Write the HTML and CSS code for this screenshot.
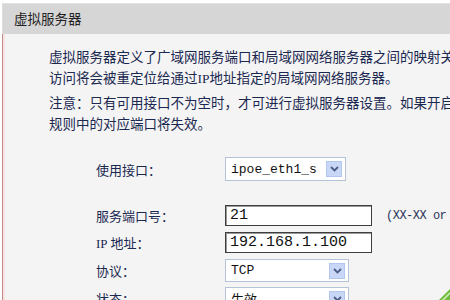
FILE: index.html
```html
<!DOCTYPE html>
<html>
  <head>
    <meta charset="utf-8">
    <title>虚拟服务器</title>
    <link rel="stylesheet" href="styles.css">
  </head>
  <body>
    <div class="panel">
      <div class="panel-title">虚拟服务器</div>
      <div class="panel-body">
        <p class="intro">虚拟服务器定义了广域网服务端口和局域网网络服务器之间的映射关系，所有对该广域网服务端口的<br>访问将会被重定位给通过<span class="latin">IP</span>地址指定的局域网网络服务器。</p>
        <p class="intro">注意：只有可用接口不为空时，才可进行虚拟服务器设置。如果开启了DMZ主机，则DMZ主机<br>规则中的对应端口将失效。</p>

        <div class="form">
          <div class="row row-first">
            <div class="label">使用接口：</div>
            <div class="select select-iface">
              <span class="select-text">ipoe_eth1_s</span>
              <span class="select-arrow">
                <svg width="9" height="6" viewBox="0 0 9 6"><path d="M1 1 L4.5 4.5 L8 1" fill="none" stroke="#4a5d86" stroke-width="1.8"/></svg>
              </span>
            </div>
          </div>
          <div class="row row-input row-gap">
            <div class="label">服务端口号：</div>
            <div class="input">21</div>
            <div class="hint">(XX-XX or XX)</div>
          </div>
          <div class="row row-input">
            <div class="label"><span class="latin">IP</span> 地址：</div>
            <div class="input">192.168.1.100</div>
          </div>
          <div class="row">
            <div class="label">协议：</div>
            <div class="select select-proto">
              <span class="select-text">TCP</span>
              <span class="select-arrow">
                <svg width="9" height="6" viewBox="0 0 9 6"><path d="M1 1 L4.5 4.5 L8 1" fill="none" stroke="#4a5d86" stroke-width="1.8"/></svg>
              </span>
            </div>
          </div>
          <div class="row">
            <div class="label">状态：</div>
            <div class="select select-proto">
              <span class="select-text cjk">生效</span>
              <span class="select-arrow">
                <svg width="9" height="6" viewBox="0 0 9 6"><path d="M1 1 L4.5 4.5 L8 1" fill="none" stroke="#4a5d86" stroke-width="1.8"/></svg>
              </span>
            </div>
            <svg class="corner-icon" width="14" height="14" viewBox="0 0 14 14"><path d="M2 14 L14 2 L14 14 Z" fill="#6fbf3f"/><path d="M6 14 L14 6" stroke="#d8f0c0" stroke-width="1.5"/></svg>
          </div>
        </div>
      </div>
    </div>
  </body>
</html>
```

FILE: styles.css
```css
body {
  margin: 0;
  width: 450px;
  height: 300px;
  overflow: hidden;
  background-color: #ffffff;
  font-family: "Noto Sans CJK SC", "Noto Sans", sans-serif;
  color: #1b2850;
}
.panel {
  margin: 3px 0 0 2px;
  width: 600px;
}
.panel-title {
  height: 30px;
  line-height: 29px;
  padding-left: 11px;
  font-size: 13.5px;
  color: #222222;
  background-color: #d6d6d6;
  border-top: 1px solid #e2e2e2;
  border-left: 1px solid #dcdcdc;
}
.panel-body {
  height: 300px;
  padding: 12px 0 0 46px;
  background-color: #f4f4f4;
  border-left: 1px solid #c48a8a;
  box-shadow: inset 2px 0 0 #f6e4e4;
}
.intro {
  margin: 0 0 3px 0;
  font-size: 13.5px;
  line-height: 21px;
  white-space: nowrap;
}
.latin {
  font-family: "Liberation Serif", serif;
}
.form {
  margin: 23px 0 0 47px;
}
.row {
  display: flex;
  align-items: center;
  height: 23px;
  margin-bottom: 5px;
}
.row-first {
  height: 24px;
}
.row-gap {
  margin-top: 24px;
}
.row-input {
  height: 21px;
  margin-bottom: 6px;
}
.label {
  width: 129px;
  font-size: 13px;
  white-space: nowrap;
}
.select {
  box-sizing: border-box;
  height: 100%;
  display: flex;
  align-items: center;
  justify-content: space-between;
  background-color: #ffffff;
  border: 1px solid #b5c3d9;
  padding: 0 3px 0 5px;
}
.select-iface {
  width: 121px;
}
.select-proto {
  width: 124px;
}
.select-text {
  font-family: "Liberation Mono", monospace;
  font-size: 13px;
  color: #111111;
}
.select-text.cjk {
  font-family: "Noto Sans CJK SC", sans-serif;
}
.select-arrow {
  width: 16px;
  height: 16px;
  display: flex;
  align-items: center;
  justify-content: center;
  background-color: #c8d7f6;
  border: 1px solid #b3c6ee;
  box-sizing: border-box;
}
.input {
  box-sizing: border-box;
  width: 147px;
  height: 100%;
  padding-left: 4px;
  line-height: 19px;
  background-color: #ffffff;
  border: 1px solid #3e3e3e;
  box-shadow: inset 1px 1px 0 #9a9a9a;
  font-family: "Liberation Mono", monospace;
  font-size: 15px;
  color: #111111;
}
.hint {
  margin-left: 14px;
  font-family: "Liberation Mono", monospace;
  font-size: 12px;
  letter-spacing: -0.5px;
  white-space: nowrap;
  color: #2a3358;
}
.corner-icon {
  margin-left: 87px;
  align-self: flex-start;
}
```
